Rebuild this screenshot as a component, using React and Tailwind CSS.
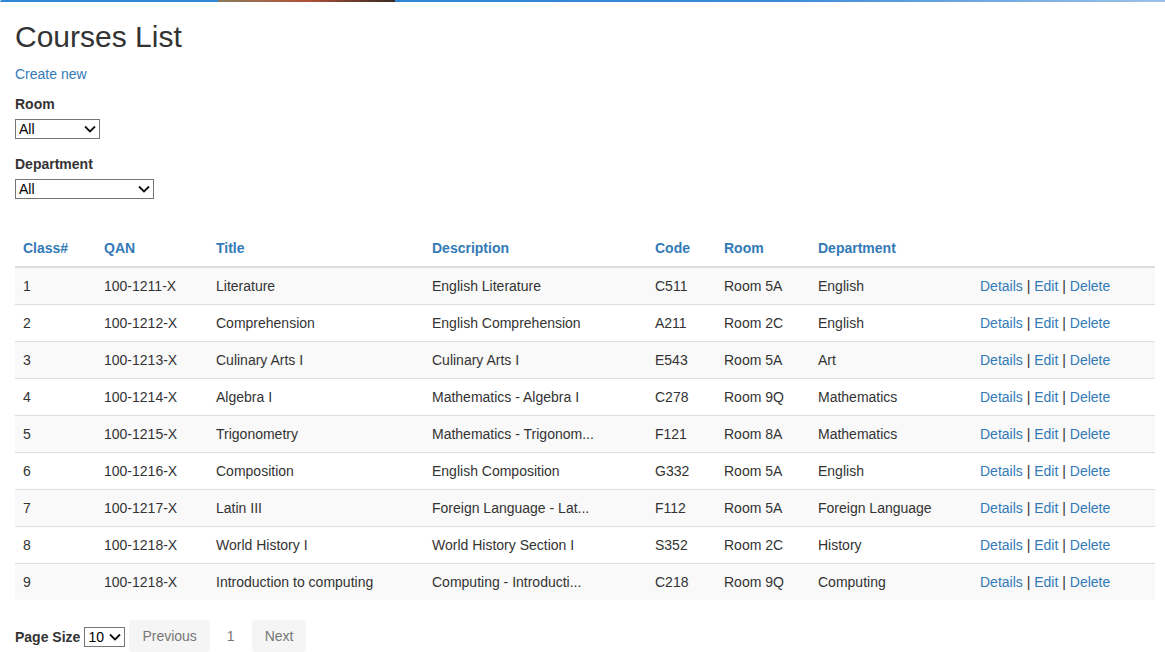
import React from "react";

const courses = [
  ["1", "100-1211-X", "Literature", "English Literature", "C511", "Room 5A", "English"],
  ["2", "100-1212-X", "Comprehension", "English Comprehension", "A211", "Room 2C", "English"],
  ["3", "100-1213-X", "Culinary Arts I", "Culinary Arts I", "E543", "Room 5A", "Art"],
  ["4", "100-1214-X", "Algebra I", "Mathematics - Algebra I", "C278", "Room 9Q", "Mathematics"],
  ["5", "100-1215-X", "Trigonometry", "Mathematics - Trigonom...", "F121", "Room 8A", "Mathematics"],
  ["6", "100-1216-X", "Composition", "English Composition", "G332", "Room 5A", "English"],
  ["7", "100-1217-X", "Latin III", "Foreign Language - Lat...", "F112", "Room 5A", "Foreign Language"],
  ["8", "100-1218-X", "World History I", "World History Section I", "S352", "Room 2C", "History"],
  ["9", "100-1218-X", "Introduction to computing", "Computing - Introducti...", "C218", "Room 9Q", "Computing"],
];

const headers = [
  ["Class#", "w-[81px]"],
  ["QAN", "w-[112px]"],
  ["Title", "w-[216px]"],
  ["Description", "w-[223px]"],
  ["Code", "w-[69px]"],
  ["Room", "w-[94px]"],
  ["Department", "w-[162px]"],
  ["", ""],
];

function Chevron() {
  return (
    <svg width="12" height="8" viewBox="0 0 12 8" className="pointer-events-none absolute right-[4px] top-[6px]">
      <path d="M1 1.5 L6 6.5 L11 1.5" fill="none" stroke="#111" strokeWidth="1.8" />
    </svg>
  );
}

function Select({ value, width }) {
  return (
    <div className={`relative inline-block ${width}`}>
      <select className="h-[20px] w-full appearance-none border border-[#767676] bg-white pl-[3px] text-[14px] leading-[18px] text-black">
        <option>{value}</option>
      </select>
      <Chevron />
    </div>
  );
}

export default function App() {
  return (
    <div className="min-h-[652px] bg-white font-['Liberation_Sans',Arial,sans-serif] text-[14px] leading-[20px] text-[#333]">
      <div className="flex h-[2px] w-full overflow-hidden rounded-tl-[4px]">
        <div className="w-[218px] bg-[#2f86d6]" />
        <div className="w-[177px] bg-gradient-to-r from-[#8a7a5a] via-[#b0503a] to-[#3a2a20]" />
        <div className="flex-1 bg-gradient-to-r from-[#2f86d6] via-[#3a8ad8] to-[#9cc2e8]" />
      </div>
      <div className="pl-[15px] pr-[10px]">
        <h2 className="mb-[10px] mt-[18px] text-[30px] font-normal leading-[33px]">Courses List</h2>
        <p className="mb-[10px] pt-[1px]">
          <a href="#" className="text-[#337ab7]">Create new</a>
        </p>
        <div className="mb-[15px]">
          <label className="mb-[5px] block font-bold">Room</label>
          <Select value="All" width="w-[85px]" />
        </div>
        <div>
          <label className="mb-[5px] block font-bold">Department</label>
          <Select value="All" width="w-[139px]" />
        </div>

        <table className="mt-[31px] w-full table-fixed border-collapse">
          <thead>
            <tr>
              {headers.map(([h, w], i) => (
                <th key={i} className={`${w} border-b-2 border-[#ddd] p-[8px] text-left font-bold text-[#337ab7]`}>
                  {h}
                </th>
              ))}
            </tr>
          </thead>
          <tbody>
            {courses.map((row, r) => (
              <tr key={r} className={r % 2 === 0 ? "bg-[#f9f9f9]" : "bg-white"}>
                {row.map((c, i) => (
                  <td key={i} className={`${r > 0 ? "border-t border-[#ddd]" : ""} whitespace-nowrap p-[8px]`}>
                    {c}
                  </td>
                ))}
                <td className={`${r > 0 ? "border-t border-[#ddd]" : ""} whitespace-nowrap p-[8px]`}>
                  <a href="#" className="text-[#337ab7]">Details</a> | <a href="#" className="text-[#337ab7]">Edit</a> |{" "}
                  <a href="#" className="text-[#337ab7]">Delete</a>
                </td>
              </tr>
            ))}
          </tbody>
        </table>

        <div className="mt-[20px] flex items-start">
          <div className="flex items-center pt-[7px]">
            <span className="mr-[4px] font-bold">Page Size</span>
            <Select value="10" width="w-[41px]" />
          </div>
          <div className="ml-[4px] flex">
            <span className="rounded-[4px] bg-[#f5f5f5] px-[13px] py-[6px] text-[#777]">Previous</span>
            <span className="px-[17px] py-[6px] text-[#777]">1</span>
            <span className="rounded-[4px] bg-[#f5f5f5] px-[13px] py-[6px] text-[#777]">Next</span>
          </div>
        </div>
      </div>
    </div>
  );
}
